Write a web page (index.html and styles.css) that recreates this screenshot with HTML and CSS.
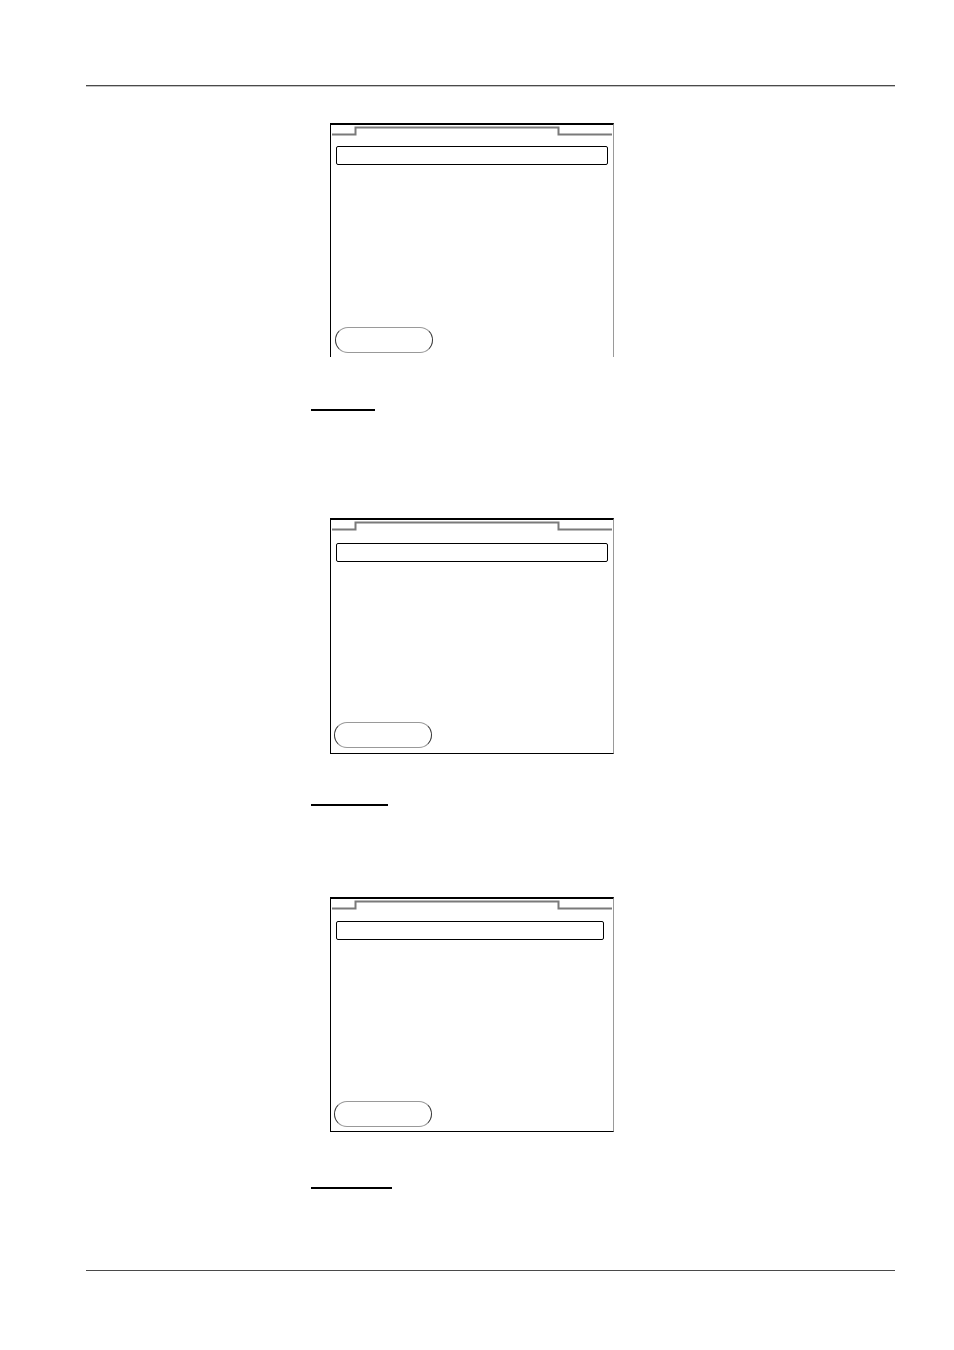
FILE: index.html
```html
<!DOCTYPE html>
<html lang="en">
<head>
<meta charset="utf-8">
<title>Manual page</title>
<link rel="stylesheet" href="styles.css">
</head>
<body>
<div class="page">
  <div class="rule rule-top"></div>

  <div class="screen screen-1">
    <svg class="tabs" width="282" height="12" viewBox="0 0 282 12">
      <polyline points="1,9.5 24.5,9.5 24.5,2.5 227.5,2.5 227.5,9.5 281,9.5" fill="none" stroke="#7a7a7a" stroke-width="2"/>
    </svg>
    <div class="field"></div>
    <div class="softkey"></div>
  </div>
  <div class="heading heading-1"></div>

  <div class="screen screen-2">
    <svg class="tabs" width="282" height="12" viewBox="0 0 282 12">
      <polyline points="1,9.5 24.5,9.5 24.5,2.5 227.5,2.5 227.5,9.5 281,9.5" fill="none" stroke="#7a7a7a" stroke-width="2"/>
    </svg>
    <div class="field"></div>
    <div class="softkey"></div>
  </div>
  <div class="heading heading-2"></div>

  <div class="screen screen-3">
    <svg class="tabs" width="282" height="12" viewBox="0 0 282 12">
      <polyline points="1,9.5 24.5,9.5 24.5,2.5 227.5,2.5 227.5,9.5 281,9.5" fill="none" stroke="#7a7a7a" stroke-width="2"/>
    </svg>
    <div class="field"></div>
    <div class="softkey"></div>
  </div>
  <div class="heading heading-3"></div>

  <div class="rule rule-bottom"></div>
</div>
</body>
</html>
```

FILE: styles.css
```css
html, body {
  margin: 0;
  padding: 0;
  background: #ffffff;
  font-family: "Liberation Sans", Arial, sans-serif;
}

.page {
  width: 954px;
  padding-top: 85px;
  display: flex;
  flex-direction: column;
}

.rule {
  margin-left: 86px;
  width: 809px;
  height: 1px;
  background: #4a4a4a;
  box-shadow: 0 0.5px 0 #888;
}

.screen {
  box-sizing: border-box;
  margin-left: 330px;
  width: 284px;
  border-top: 2px solid #000;
  border-left: 1.5px solid #000;
  border-right: 1px solid #9a9a9a;
  border-bottom: 1px solid #000;
  display: flex;
  flex-direction: column;
  align-items: flex-start;
}

.tabs {
  display: block;
  flex: none;
}

.field {
  box-sizing: border-box;
  margin-left: 5px;
  width: 272px;
  height: 19px;
  border: 1.3px solid #000;
  border-radius: 2px;
  flex: none;
}

.softkey {
  box-sizing: border-box;
  margin-left: 3px;
  width: 98px;
  height: 26px;
  border: 1.2px solid #333;
  border-top: 1.3px solid #9a9a9a;
  border-bottom: 1.6px solid #999;
  border-radius: 13px;
  flex: none;
}

.screen-1 {
  margin-top: 37px;
  height: 234px;
  border-bottom: none;
}
.screen-1 .field { margin-top: 9px; }
.screen-1 .softkey { margin-top: 162px; margin-left: 4px; }

.screen-2 {
  margin-top: 107px;
  height: 236px;
}
.screen-2 .field { margin-top: 11px; }
.screen-2 .softkey { margin-top: 160px; }

.screen-3 {
  margin-top: 91px;
  height: 235px;
}
.screen-3 .field { margin-top: 10px; width: 268px; }
.screen-3 .softkey { margin-top: 161px; }

.heading {
  margin-left: 311px;
  height: 2px;
  background: #000;
}
.heading-1 { margin-top: 52px; width: 64px; }
.heading-2 { margin-top: 50px; width: 77px; }
.heading-3 { margin-top: 55px; width: 81px; }

.rule-bottom { margin-top: 81px; }
```
